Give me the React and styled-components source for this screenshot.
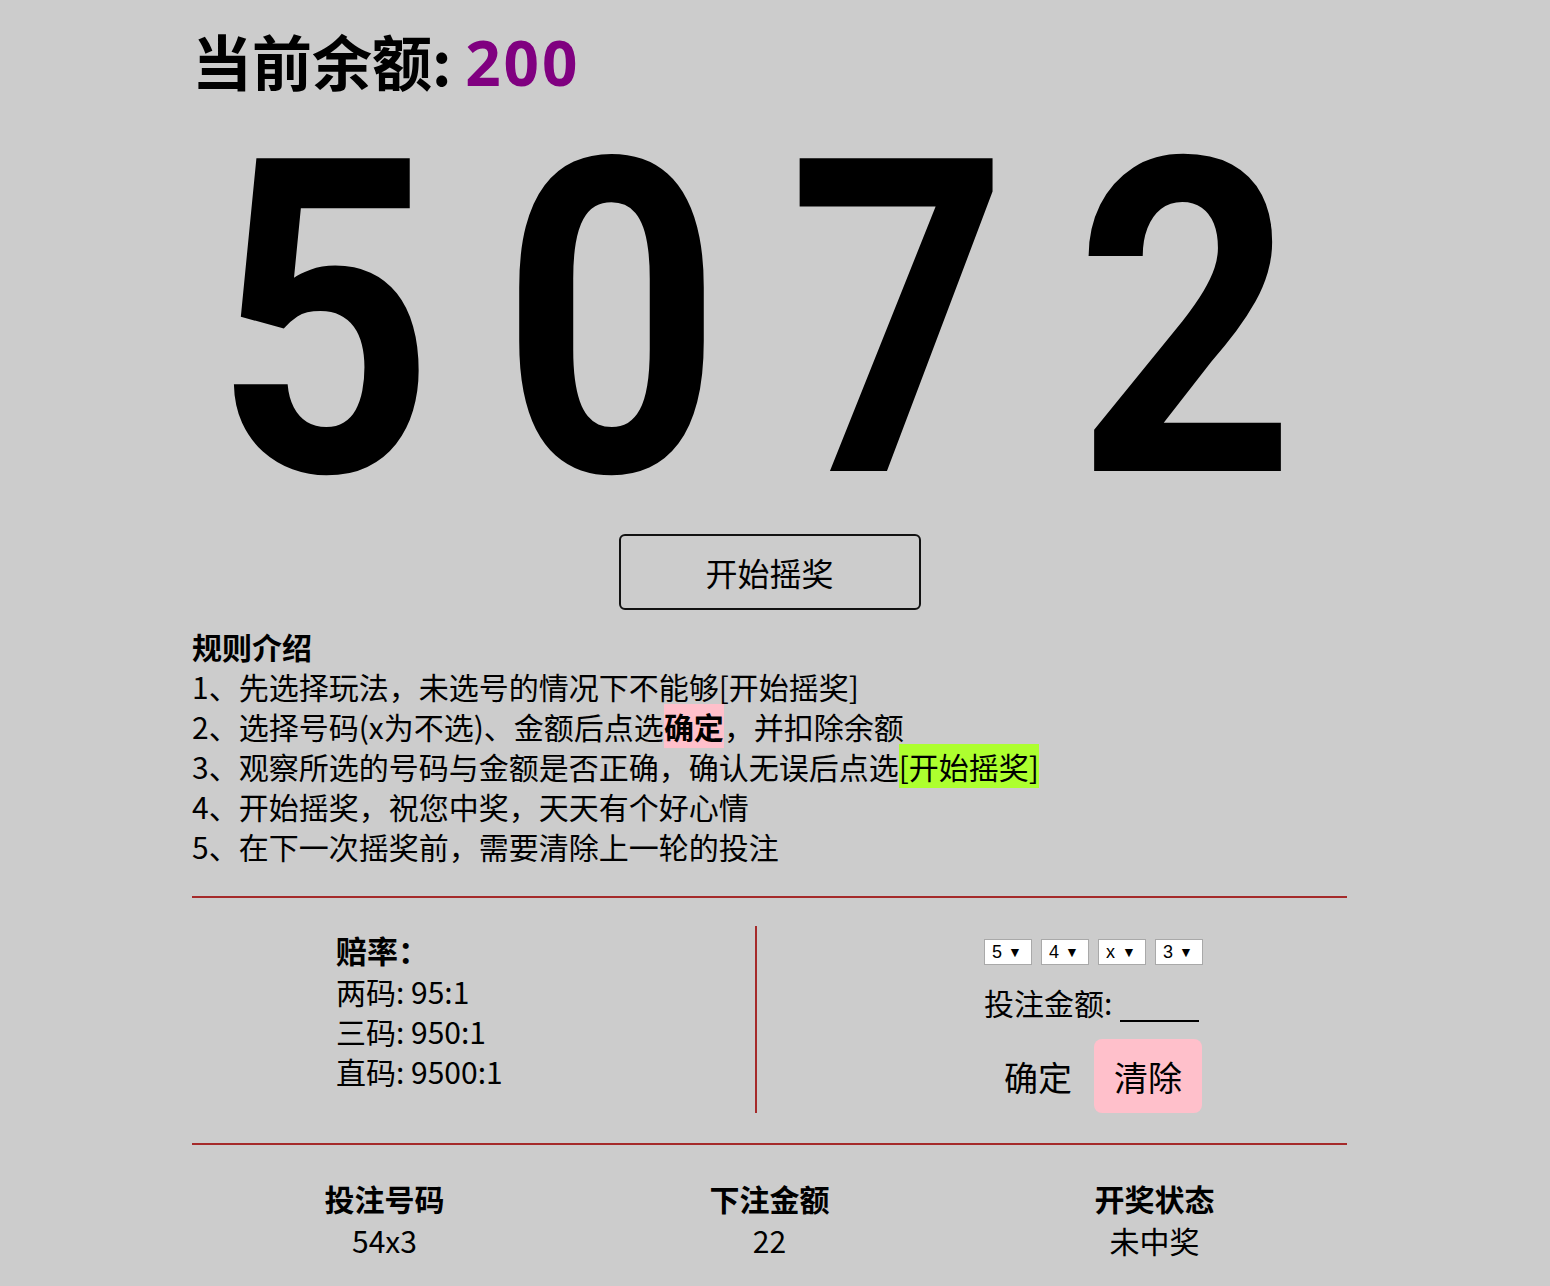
import React, { useState } from 'react';
import styled, { createGlobalStyle } from 'styled-components';

const GlobalStyle = createGlobalStyle`
  html, body {
    margin: 0;
    padding: 0;
    background-color: #cccccc;
  }
  body {
    font-family: "Noto Sans CJK SC", "Noto Sans", sans-serif;
    color: #000;
  }
`;

const Page = styled.div`
  width: 1155px;
  margin-left: 192px;
  padding-top: 25px;
  padding-bottom: 25px;
`;

const Balance = styled.h1`
  margin: 0;
  height: 70px;
  font-size: 60px;
  line-height: 70px;
  font-weight: 700;
`;

const Amount = styled.span`
  color: #800080;
  font-family: "Open Sans", "Noto Sans CJK SC", sans-serif;
  font-size: 62px;
  letter-spacing: 3px;
`;

// big drawn numbers
const DigitRow = styled.div`
  display: grid;
  grid-template-columns: repeat(4, 287px);
  margin: 36px 0 0 -11px;
  height: 380px;
`;

const Digit = styled.div`
  font-family: Roboto, "Liberation Sans", sans-serif;
  font-weight: 700;
  font-size: 440px;
  line-height: 380px;
  text-align: center;
  transform: scaleX(0.873);
`;

const DrawButton = styled.button`
  display: block;
  margin: 23px auto 0;
  width: 302px;
  height: 76px;
  border: 2px solid #111;
  border-radius: 6px;
  background: transparent;
  font-family: inherit;
  font-size: 32px;
  color: #000;
  cursor: pointer;
`;

const Rules = styled.div`
  margin-top: 16px;
  font-size: 30px;
  line-height: 40px;
`;

const RulesTitle = styled.div`
  font-weight: 700;
`;

const Mark = styled.span`
  background-color: ${(p) => p.$bg};
  font-weight: ${(p) => (p.$bold ? 700 : 400)};
`;

const Divider = styled.hr`
  margin: 30px 0 0;
  border: none;
  border-top: 2px solid #a52a2a;
`;

const BetSection = styled.div`
  display: flex;
  margin-top: 28px;
`;

const OddsColumn = styled.div`
  width: 565px;
  padding-left: 144px;
  box-sizing: border-box;
  border-right: 2px solid #a52a2a;
  font-size: 30px;
  line-height: 40px;
`;

const OddsTitle = styled.div`
  font-weight: 700;
  font-size: 31px;
  line-height: 43px;
  margin-top: 2px;
`;

const BetColumn = styled.div`
  padding-left: 227px;
  display: flex;
  flex-direction: column;
`;

const SelectRow = styled.div`
  display: flex;
  gap: 9px;
  margin-top: 13px;
`;

const SelectBox = styled.label`
  display: inline-flex;
  align-items: center;
  width: 48px;
  height: 26px;
  box-sizing: border-box;
  border: 1px solid #a9a9a9;
  background: #fff;
  padding-left: 7px;
  font-family: "Liberation Sans", Arial, sans-serif;
  font-size: 18px;
`;

const Select = styled.select`
  appearance: none;
  border: none;
  background: transparent;
  padding: 0;
  margin: 0;
  font: inherit;
  color: #000;
  width: 15px;
  outline: none;
`;

const Arrow = styled.span`
  font-size: 14px;
  margin-left: 1px;
`;

const AmountRow = styled.div`
  display: flex;
  align-items: flex-end;
  margin-top: 17px;
  font-size: 30px;
  line-height: 40px;
`;

const AmountInput = styled.input`
  width: 75px;
  margin-left: 8px;
  border: none;
  border-bottom: 2px solid #000;
  background: transparent;
  font-size: 22px;
  outline: none;
`;

const ButtonRow = styled.div`
  display: flex;
  gap: 2px;
  margin-top: 17px;
`;

const ActionButton = styled.button`
  width: 108px;
  height: 74px;
  border: none;
  border-radius: 8px;
  background: ${(p) => (p.$pink ? '#ffc0cb' : 'transparent')};
  font-family: inherit;
  font-size: 34px;
  color: #000;
  cursor: pointer;
`;

const ResultTable = styled.div`
  display: grid;
  grid-template-columns: repeat(3, 1fr);
  padding-top: 32px;
  text-align: center;
  font-size: 30px;
  line-height: 42px;
`;

const ResultHead = styled.div`
  font-weight: 700;
`;

const options = ['x', '0', '1', '2', '3', '4', '5', '6', '7', '8', '9'];

const App = () => {
  const [picks, setPicks] = useState(['5', '4', 'x', '3']);
  const [bet, setBet] = useState('');

  const setPick = (i, v) => {
    const next = [...picks];
    next[i] = v;
    setPicks(next);
  };

  return (
    <>
      <GlobalStyle />
      <Page>
        <Balance>
          当前余额: <Amount>200</Amount>
        </Balance>

        <DigitRow>
          {['5', '0', '7', '2'].map((d, i) => (
            <Digit key={i}>{d}</Digit>
          ))}
        </DigitRow>

        <DrawButton>开始摇奖</DrawButton>

        <Rules>
          <RulesTitle>规则介绍</RulesTitle>
          <div>1、先选择玩法，未选号的情况下不能够[开始摇奖]</div>
          <div>
            2、选择号码(x为不选)、金额后点选<Mark $bg="#ffc0cb" $bold>确定</Mark>，并扣除余额
          </div>
          <div>
            3、观察所选的号码与金额是否正确，确认无误后点选<Mark $bg="#adff2f">[开始摇奖]</Mark>
          </div>
          <div>4、开始摇奖，祝您中奖，天天有个好心情</div>
          <div>5、在下一次摇奖前，需要清除上一轮的投注</div>
        </Rules>

        <Divider />

        <BetSection>
          <OddsColumn>
            <OddsTitle>赔率：</OddsTitle>
            <div>两码: 95:1</div>
            <div>三码: 950:1</div>
            <div>直码: 9500:1</div>
          </OddsColumn>
          <BetColumn>
            <SelectRow>
              {picks.map((p, i) => (
                <SelectBox key={i}>
                  <Select value={p} onChange={(e) => setPick(i, e.target.value)}>
                    {options.map((o) => (
                      <option key={o} value={o}>{o}</option>
                    ))}
                  </Select>
                  <Arrow>▼</Arrow>
                </SelectBox>
              ))}
            </SelectRow>
            <AmountRow>
              投注金额:
              <AmountInput value={bet} onChange={(e) => setBet(e.target.value)} />
            </AmountRow>
            <ButtonRow>
              <ActionButton>确定</ActionButton>
              <ActionButton $pink>清除</ActionButton>
            </ButtonRow>
          </BetColumn>
        </BetSection>

        <Divider />

        <ResultTable>
          <ResultHead>投注号码</ResultHead>
          <ResultHead>下注金额</ResultHead>
          <ResultHead>开奖状态</ResultHead>
          <div>54x3</div>
          <div>22</div>
          <div>未中奖</div>
        </ResultTable>
      </Page>
    </>
  );
};

export default App;
